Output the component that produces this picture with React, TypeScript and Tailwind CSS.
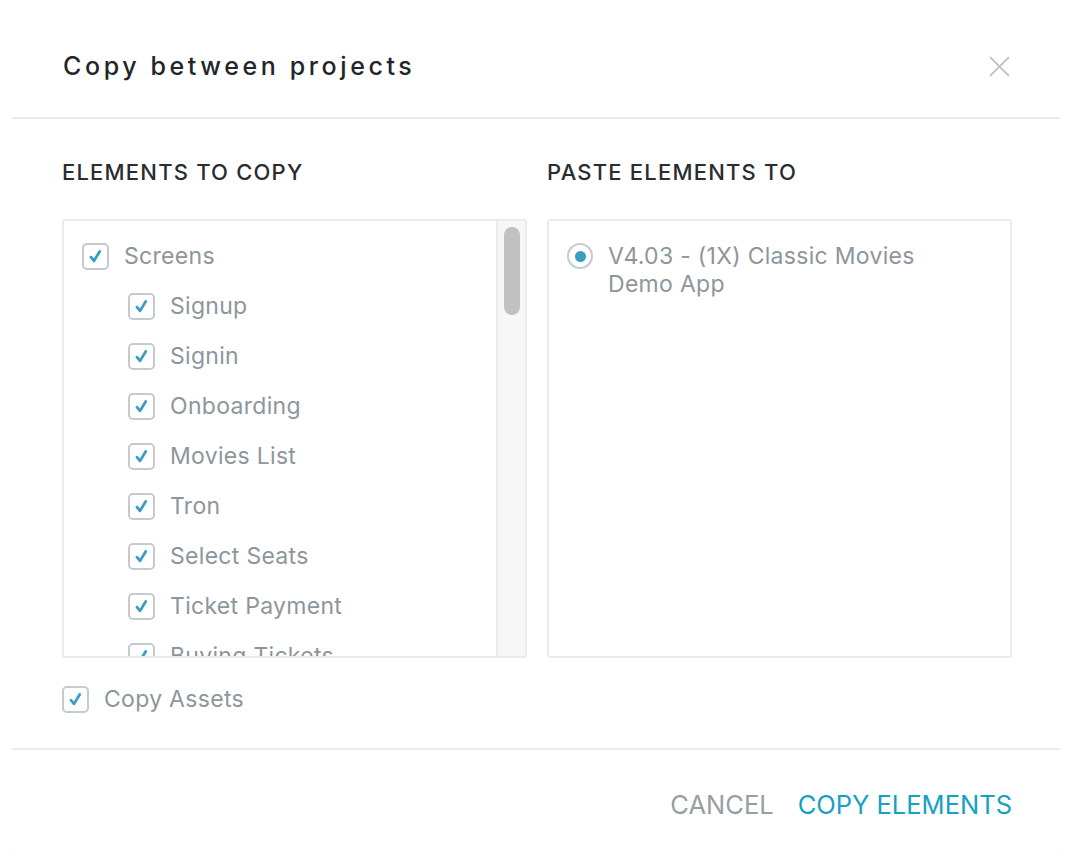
const screens = [
  "Signup",
  "Signin",
  "Onboarding",
  "Movies List",
  "Tron",
  "Select Seats",
  "Ticket Payment",
  "Buying Tickets",
  "Confirmation",
];

const Check = () => (
  <span className="flex h-[27px] w-[27px] shrink-0 items-center justify-center rounded-[5px] border-2 border-[#c5cacd] bg-white">
    <svg viewBox="0 0 24 24" className="h-[21px] w-[21px]">
      <path
        d="M6.8 12.8 L10.3 17 L16.8 6.2"
        fill="none"
        stroke="#3b9ec0"
        strokeWidth="3.2"
        strokeLinecap="round"
        strokeLinejoin="round"
      />
    </svg>
  </span>
);

const Row = ({ label, indent }: { label: string; indent?: boolean }) => (
  <div className={`flex h-[50px] shrink-0 items-center gap-[15px] ${indent ? "pl-[64px]" : "pl-[18px]"}`}>
    <Check />
    <span className="whitespace-nowrap text-[23px] tracking-[0.3px] text-[#8d969c]">{label}</span>
  </div>
);

const App = () => {
  return (
    <div
      className="min-h-[862px] w-full bg-white px-[12px] pt-[6px]"
      style={{ fontFamily: "Inter, 'Liberation Sans', sans-serif" }}
    >
      <div className="flex h-[850px] flex-col rounded-[4px] bg-white shadow-[0_0_1px_rgba(0,0,0,0.06)]">
        {/* Header */}
        <div className="flex h-[113px] shrink-0 items-center justify-between border-b-2 border-[#ebebeb] pl-[51px] pr-[50px] pt-[10px]">
          <h1 className="text-[25px] font-medium tracking-[3.6px] text-[#222629]">
            Copy between projects
          </h1>
          <svg viewBox="0 0 20 20" className="h-[21px] w-[21px]">
            <path d="M1 1 L19 19 M19 1 L1 19" stroke="#b9bfc3" strokeWidth="1.6" fill="none" />
          </svg>
        </div>

        {/* Body */}
        <div className="flex flex-1 flex-col pl-[50px] pr-[48px]">
          <div className="grid grid-cols-2 gap-x-[20px] pt-[37px]">
            <h2 className="text-[22px] font-medium tracking-[1.2px] text-[#2a2d30]">ELEMENTS TO COPY</h2>
            <h2 className="text-[22px] font-medium tracking-[1.2px] text-[#2a2d30]">PASTE ELEMENTS TO</h2>

            <div className="mt-[30px] flex h-[439px] overflow-hidden rounded-[3px] border-2 border-[#ebebeb]">
              <div className="flex flex-1 flex-col overflow-hidden pt-[10px]">
                <Row label="Screens" />
                {screens.map((s) => (
                  <Row key={s} label={s} indent />
                ))}
              </div>
              <div className="flex w-[29px] shrink-0 justify-center border-l-2 border-[#ebebeb] bg-[#f7f7f7] pt-[6px]">
                <div className="h-[88px] w-[16px] rounded-full bg-[#c1c1c1]" />
              </div>
            </div>

            <div className="mt-[30px] h-[439px] rounded-[3px] border-2 border-[#ebebeb] pl-[18px] pr-[70px] pt-[21px]">
              <div className="flex items-start gap-[15px]">
                <span className="mt-[1px] flex h-[26px] w-[26px] shrink-0 items-center justify-center rounded-full border-2 border-[#c5cacd]">
                  <span className="h-[11px] w-[11px] rounded-full bg-[#3b9ec0]" />
                </span>
                <span className="text-[23px] leading-[28px] tracking-[0.3px] text-[#8d969c]">
                  V4.03 - (1X) Classic Movies Demo App
                </span>
              </div>
            </div>
          </div>

          <div className="mt-[24px] flex items-center gap-[15px]">
            <Check />
            <span className="text-[23px] tracking-[0.3px] text-[#8d969c]">Copy Assets</span>
          </div>
        </div>

        {/* Footer */}
        <div className="flex h-[108px] shrink-0 items-center justify-end gap-[24px] border-t-2 border-[#ebebeb] pr-[48px] pt-[4px]">
          <button className="text-[25.5px] text-[#979ea3]">CANCEL</button>
          <button className="text-[25.5px] text-[#14a1c3]">COPY ELEMENTS</button>
        </div>
      </div>
    </div>
  );
};

export default App;
